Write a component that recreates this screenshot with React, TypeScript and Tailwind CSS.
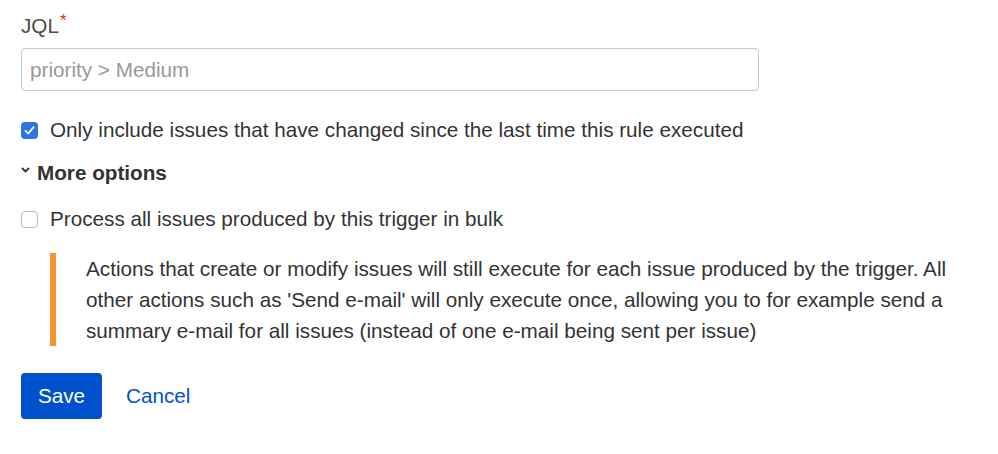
import React from "react";

export default function App() {
  return (
    <div
      className="w-[998px] h-[454px] bg-white pl-[21px] pt-[14px] text-[#333333] text-[20.7px]"
      style={{ fontFamily: '"Liberation Sans", Arial, sans-serif' }}
    >
      <div className="h-[24px] leading-[24px] text-[#4d4d4d]">
        JQL<span className="text-[#de350b] text-[17px] align-top relative top-[-5px] ml-[1px]">*</span>
      </div>
      <div className="mt-[10px] w-[738px] h-[43px] border border-[#c8c8c8] rounded-[4px] flex items-center px-[8px] text-[#999999]">
        priority &gt; Medium
      </div>
      <div className="mt-[27px] flex items-center h-[24px]">
        <div className="w-[17px] h-[17px] rounded-[4px] bg-[#2f74e6] flex items-center justify-center">
          <svg width="13" height="13" viewBox="0 0 12 12" fill="none">
            <path d="M2.3 6.3 L4.9 8.8 L9.8 2.9" stroke="white" strokeWidth="1.7" strokeLinecap="round" strokeLinejoin="round" />
          </svg>
        </div>
        <span className="ml-[12px]">Only include issues that have changed since the last time this rule executed</span>
      </div>
      <div className="mt-[19px] flex items-center h-[24px] font-bold">
        <svg width="10" height="10" viewBox="0 0 10 10" className="mr-[6px] mt-[-6px]">
          <path d="M1.5 3.5 L4.5 6.5 L7.5 3.5" stroke="#333" strokeWidth="1.8" fill="none" strokeLinecap="round" strokeLinejoin="round" />
        </svg>
        More options
      </div>
      <div className="mt-[22px] flex items-center h-[24px]">
        <div className="w-[17px] h-[17px] rounded-[4px] border border-[#b8b8b8] bg-white" />
        <span className="ml-[12px]">Process all issues produced by this trigger in bulk</span>
      </div>
      <div className="mt-[22px] ml-[29px] flex">
        <div className="w-[6px] bg-[#f79232] h-[93px]" />
        <div className="ml-[30px] w-[880px] leading-[31px]">
          Actions that create or modify issues will still execute for each issue produced by the trigger. All other actions such as 'Send e-mail' will only execute once, allowing you to for example send a summary e-mail for all issues (instead of one e-mail being sent per issue)
        </div>
      </div>
      <div className="mt-[27px] flex items-center">
        <button className="w-[81px] h-[46px] rounded-[4px] bg-[#0052cc] text-white">Save</button>
        <button className="ml-[24px] text-[#0052cc]">Cancel</button>
      </div>
    </div>
  );
}
